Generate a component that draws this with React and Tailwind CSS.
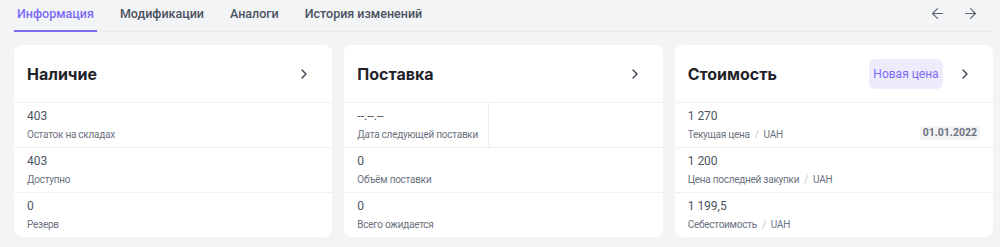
import { ChevronRight, ArrowLeft, ArrowRight } from "lucide-react";

const tabs = ["Информация", "Модификации", "Аналоги", "История изменений"];

function Row({ value, label, unit, extra, className = "" }) {
  return (
    <div className={`flex h-[45px] items-start justify-between border-t border-[#eef0f3] px-[13px] ${className}`}>
      <Cell value={value} label={label} unit={unit} />
      {extra}
    </div>
  );
}

function Cell({ value, label, unit }) {
  return (
    <div className="whitespace-nowrap pt-[5px]">
      <div className="text-[12px] leading-[16px] text-[#4b5563]">{value}</div>
      <div className="mt-[4px] text-[10px] leading-[14px] tracking-[-0.25px] text-[#6b7280]">
        {label}
        {unit && (
          <>
            <span className="mx-[5px] text-[#c3c7ce]">/</span>
            {unit}
          </>
        )}
      </div>
    </div>
  );
}

function Card({ title, action, children }) {
  return (
    <div className="flex-1 overflow-hidden rounded-[8px] bg-white">
      <div className="flex h-[57px] items-center justify-between pl-[13px] pr-[20px]">
        <h2 className="font-['Inter'] text-[16px] font-bold text-[#1f2329]">{title}</h2>
        <div className="flex items-center gap-[14px]">
          {action}
          <ChevronRight size={16} strokeWidth={2} className="text-[#374151]" />
        </div>
      </div>
      {children}
    </div>
  );
}

export default function App() {
  return (
    <div className="h-[247px] w-[1000px] bg-[#f3f4f6] pl-[14px] pr-[7px] font-['Roboto',sans-serif]">
      {/* Вкладки */}
      <div className="flex h-[32px] items-start justify-between border-b border-[#e8eaee]">
        <div className="flex gap-[20px]">
          {tabs.map((t, i) => (
            <div
              key={t}
              className={`h-[32px] px-[3px] pt-[5px] text-[12.5px] font-medium ${
                i === 0 ? "border-b-2 border-[#7b6cf6] text-[#7b6cf6]" : "text-[#4b5261]"
              }`}
            >
              {t}
            </div>
          ))}
        </div>
        <div className="flex items-center gap-[16px] pt-[5px] pr-[14px] text-[#5b6473]">
          <ArrowLeft size={17} strokeWidth={1.6} />
          <ArrowRight size={17} strokeWidth={1.6} />
        </div>
      </div>

      {/* Карточки */}
      <div className="mt-[13px] flex gap-[12px]">
        <Card title="Наличие">
          <Row value="403" label="Остаток на складах" />
          <Row value="403" label="Доступно" />
          <Row value="0" label="Резерв" />
        </Card>

        <Card title="Поставка">
          <div className="flex h-[45px] border-t border-[#eef0f3]">
            <div className="w-[145px] border-r border-[#eef0f3] px-[13px]">
              <Cell value="--.--.--" label="Дата следующей поставки" />
            </div>
            <div className="flex-1" />
          </div>
          <Row value="0" label="Объём поставки" />
          <Row value="0" label="Всего ожидается" />
        </Card>

        <Card
          title="Стоимость"
          action={
            <button className="h-[30px] w-[74px] rounded-[6px] bg-[#eeebfd] text-[12px] text-[#7b6cf6]">
              Новая цена
            </button>
          }
        >
          <Row
            value="1 270"
            label="Текущая цена"
            unit="UAH"
            extra={
              <span className="mt-[23px] rounded-[3px] bg-[#f3f4f6] px-[3px] text-[10.5px] font-bold leading-[14px] text-[#6b7280]">
                01.01.2022
              </span>
            }
          />
          <Row value="1 200" label="Цена последней закупки" unit="UAH" />
          <Row value="1 199,5" label="Себестоимость" unit="UAH" />
        </Card>
      </div>
    </div>
  );
}
